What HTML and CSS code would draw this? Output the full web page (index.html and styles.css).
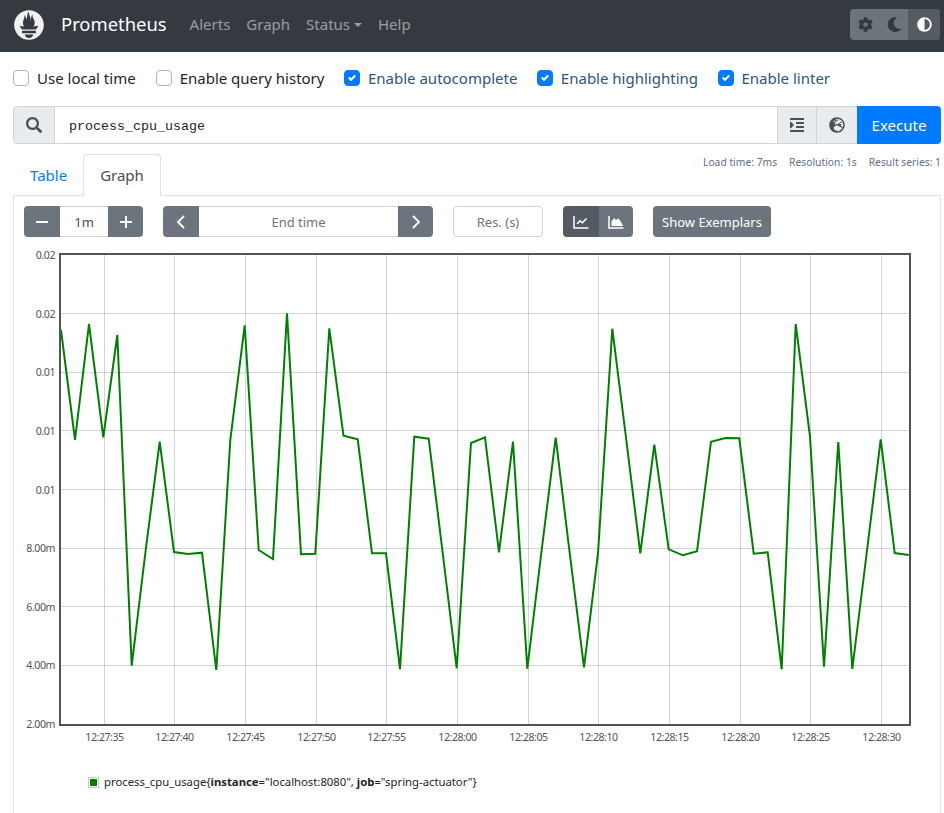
FILE: index.html
```html
<!DOCTYPE html>
<html lang="en">
<head>
<meta charset="utf-8">
<title>Prometheus Time Series Collection and Processing Server</title>
<link rel="stylesheet" href="styles.css">
</head>
<body>
<svg class="defs" width="0" height="0" aria-hidden="true">
  <symbol id="check" viewBox="0 0 8 8"><path d="M6.564.75l-3.59 3.612-1.538-1.55L0 4.26l2.974 2.99L8 2.193z"/></symbol>
</svg>
<nav class="navbar">
  <svg class="logo" viewBox="0 0 113.333 114.667"><path fill="#f2f2f2" d="M56.667.667C25.372.667 0 26.036 0 57.332c0 31.295 25.372 56.666 56.667 56.666s56.666-25.371 56.666-56.666C113.333 26.036 87.961.667 56.667.667zm0 106.055c-8.904 0-16.123-5.948-16.123-13.283H72.79c0 7.335-7.219 13.283-16.123 13.283zM83.297 89H30.034v-9.658h53.264V89zm-.191-14.629H30.186c-.176-.203-.356-.403-.526-.609-5.452-6.62-6.736-10.076-7.983-13.598-.021-.116 6.611 1.355 11.314 2.413 0 0 2.42.56 5.958 1.205-3.397-3.982-5.414-9.044-5.414-14.218 0-11.359 8.712-21.285 5.569-29.308 3.059.249 6.331 6.456 6.552 16.161 3.252-4.494 4.613-12.701 4.613-17.733 0-5.21 3.433-11.262 6.867-11.469-3.061 5.045.793 9.37 4.219 20.099 1.285 4.03 1.121 10.812 2.113 15.113.329-8.933 1.865-21.967 7.532-26.467-2.5 5.667.37 12.758 2.333 16.167 3.167 5.5 5.087 9.667 5.087 17.548 0 5.284-1.951 10.259-5.242 14.148 3.742-.702 6.326-1.335 6.326-1.335l12.152-2.371c.001-.001-1.765 7.261-8.55 14.254z"/></svg>
  <a class="brand">Prometheus</a>
  <ul class="nav">
    <li>Alerts</li>
    <li>Graph</li>
    <li>Status<span class="caret"></span></li>
    <li>Help</li>
  </ul>
  <div class="theme">
    <span class="theme-btn gear"><svg viewBox="0 0 512 512"><path d="M487.4 315.7l-42.6-24.6c4.3-23.2 4.3-47 0-70.2l42.6-24.6c4.9-2.8 7.1-8.6 5.5-14-11.1-35.6-30-67.8-54.7-94.6-3.8-4.1-10-5.1-14.8-2.3L380.8 110c-17.9-15.4-38.5-27.3-60.8-35.1V25.8c0-5.6-3.9-10.5-9.4-11.7-36.7-8.2-74.3-7.8-109.2 0-5.5 1.2-9.4 6.1-9.4 11.7V75c-22.2 7.9-42.8 19.8-60.8 35.1L88.7 85.5c-4.9-2.8-11-1.9-14.8 2.3-24.7 26.7-43.6 58.9-54.7 94.6-1.7 5.4.6 11.2 5.5 14L67.3 221c-4.3 23.2-4.3 47 0 70.2l-42.6 24.6c-4.9 2.8-7.1 8.6-5.5 14 11.1 35.6 30 67.8 54.7 94.6 3.8 4.1 10 5.1 14.8 2.3l42.6-24.6c17.9 15.4 38.5 27.3 60.8 35.1v49.2c0 5.6 3.9 10.5 9.4 11.7 36.7 8.2 74.3 7.8 109.2 0 5.5-1.2 9.4-6.1 9.4-11.7v-49.2c22.2-7.9 42.8-19.8 60.8-35.1l42.6 24.6c4.9 2.8 11 1.9 14.8-2.3 24.7-26.7 43.6-58.9 54.7-94.6 1.5-5.5-.7-11.3-5.6-14.1zM256 336c-44.1 0-80-35.9-80-80s35.9-80 80-80 80 35.9 80 80-35.9 80-80 80z"/></svg></span>
    <span class="theme-btn moon"><svg viewBox="0 0 512 512"><path d="M283.211 512c78.962 0 151.079-35.925 198.857-94.792 7.068-8.708-.639-21.43-11.562-19.35-124.203 23.654-238.262-71.576-238.262-196.954 0-72.222 38.662-138.635 101.498-174.394 9.686-5.512 7.25-20.197-3.756-22.23A258.156 258.156 0 0 0 283.211 0c-141.309 0-256 114.511-256 256 0 141.309 114.511 256 256 256z"/></svg></span>
    <span class="theme-btn adjust"><svg viewBox="0 0 512 512"><path d="M8 256c0 136.966 111.033 248 248 248s248-111.034 248-248S392.966 8 256 8 8 119.033 8 256zm248 184V72c101.705 0 184 82.311 184 184 0 101.705-82.311 184-184 184z"/></svg></span>
  </div>
</nav>
<main class="page">
  <div class="options">
    <label class="opt"><span class="box"></span>Use local time</label>
    <label class="opt"><span class="box"></span>Enable query history</label>
    <label class="opt on"><span class="box"><svg><use href="#check"/></svg></span>Enable autocomplete</label>
    <label class="opt on"><span class="box"><svg><use href="#check"/></svg></span>Enable highlighting</label>
    <label class="opt on"><span class="box"><svg><use href="#check"/></svg></span>Enable linter</label>
  </div>
  <div class="query">
    <span class="addon search"><svg viewBox="0 0 512 512"><path d="M505 442.7L405.3 343c-4.5-4.5-10.6-7-17-7H372c27.6-35.3 44-79.7 44-128C416 93.1 322.9 0 208 0S0 93.1 0 208s93.1 208 208 208c48.3 0 92.7-16.4 128-44v16.3c0 6.4 2.5 12.5 7 17l99.7 99.7c9.4 9.4 24.6 9.4 33.9 0l28.3-28.3c9.4-9.4 9.4-24.6.1-34zM208 344c-75 0-136-61-136-136 0-75 61-136 136-136 75 0 136 61 136 136 0 75-61 136-136 136z"/></svg></span>
    <div class="expr">process_cpu_usage</div>
    <span class="addon indent"><svg viewBox="0 0 448 512"><path d="M27.31 363.3l96-96a16 16 0 0 0 0-22.62l-96-96C17.27 138.66 0 145.78 0 160v192c0 14.31 17.33 21.3 27.31 11.3zM432 416H16a16 16 0 0 0-16 16v32a16 16 0 0 0 16 16h416a16 16 0 0 0 16-16v-32a16 16 0 0 0-16-16zm3.17-128H204.83A12.82 12.82 0 0 0 192 300.83v38.34A12.82 12.82 0 0 0 204.83 352h230.34A12.82 12.82 0 0 0 448 339.17v-38.34A12.82 12.82 0 0 0 435.17 288zm0-128H204.83A12.82 12.82 0 0 0 192 172.83v38.34A12.82 12.82 0 0 0 204.83 224h230.34A12.82 12.82 0 0 0 448 211.17v-38.34A12.82 12.82 0 0 0 435.17 160zM432 32H16A16 16 0 0 0 0 48v32a16 16 0 0 0 16 16h416a16 16 0 0 0 16-16V48a16 16 0 0 0-16-16z"/></svg></span>
    <span class="addon globe"><svg viewBox="0 0 496 512"><path d="M248 8C111 8 0 119 0 256s111 248 248 248 248-111 248-248S385 8 248 8zm200 248c0 22.5-3.9 44.2-10.8 64.4h-20.3c-4.3 0-8.4-1.7-11.4-4.8l-32-32.6c-4.5-4.6-4.5-12.1.1-16.7l12.5-12.5v-8.7c0-3-1.2-5.9-3.3-8l-9.4-9.4c-2.1-2.1-5-3.3-8-3.3h-16c-6.2 0-11.3-5.1-11.3-11.3 0-3 1.2-5.9 3.3-8l9.4-9.4c2.1-2.1 5-3.3 8-3.3h32c6.2 0 11.3-5.1 11.3-11.3v-9.4c0-6.2-5.1-11.3-11.3-11.3h-36.7c-8.8 0-16 7.2-16 16v4.5c0 6.9-4.4 13-10.9 15.2l-31.6 10.5c-3.3 1.1-5.5 4.1-5.5 7.6v2.2c0 4.4-3.6 8-8 8h-16c-4.4 0-8-3.6-8-8s-3.6-8-8-8H247c-3 0-5.8 1.7-7.2 4.4l-9.4 18.7c-2.7 5.4-8.2 8.8-14.3 8.8H194c-8.8 0-16-7.2-16-16V199c0-4.2 1.7-8.3 4.7-11.3l20.1-20.1c4.6-4.6 7.2-10.9 7.2-17.5 0-3.4 2.2-6.5 5.5-7.6l40-13.3c1.7-.6 3.2-1.5 4.4-2.7l26.8-26.8c2.1-2.1 3.3-5 3.3-8 0-6.2-5.1-11.3-11.3-11.3H258l-16 16v8c0 4.4-3.6 8-8 8h-16c-4.4 0-8-3.6-8-8v-20c0-2.5 1.2-4.9 3.2-6.4l28.9-21.7c1.9-.1 3.8-.3 5.7-.3C358.3 56 448 145.7 448 256zM130.1 149.1c0-3 1.2-5.9 3.3-8l25.4-25.4c2.1-2.1 5-3.3 8-3.3 6.2 0 11.3 5.1 11.3 11.3v16c0 3-1.2 5.9-3.3 8l-9.4 9.4c-2.1 2.1-5 3.3-8 3.3h-16c-6.2 0-11.3-5.1-11.3-11.3zm128 306.4v-7.1c0-8.8-7.2-16-16-16h-20.2c-10.8 0-26.7-5.3-35.4-11.8l-22.2-16.7c-11.5-8.6-18.2-22.1-18.2-36.4v-23.9c0-16 8.4-30.8 22.1-39l42.9-25.7c7.1-4.2 15.2-6.5 23.4-6.5h31.2c10.9 0 21.4 3.9 29.6 10.9l43.2 37.1h18.3c8.5 0 16.6 3.4 22.6 9.4l17.3 17.3c3.4 3.4 8.1 5.3 12.9 5.3H423c-32.4 58.9-93.8 99.5-164.9 103.1z"/></svg></span>
    <button class="execute">Execute</button>
  </div>
  <div class="tabbar">
    <ul class="tabs">
      <li class="tab">Table</li>
      <li class="tab active">Graph</li>
    </ul>
    <div class="stats">
      <span>Load time: 7ms</span>
      <span>Resolution: 1s</span>
      <span>Result series: 1</span>
    </div>
  </div>
  <section class="panel">
    <div class="controls">
      <div class="group range">
        <span class="btn"><svg class="line-icon" viewBox="0 0 14 14"><path d="M1 7H13"/></svg></span>
        <span class="field mid">1m</span>
        <span class="btn plus"><svg class="line-icon" viewBox="0 0 14 14"><path d="M1 7H13M7 1V13"/></svg></span>
      </div>
      <div class="group end">
        <span class="btn"><svg class="line-icon" viewBox="0 0 14 14"><path d="M10 1L4 7L10 13"/></svg></span>
        <span class="field mid grow placeholder">End time</span>
        <span class="btn plus"><svg class="line-icon" viewBox="0 0 14 14"><path d="M4 1L10 7L4 13"/></svg></span>
      </div>
      <span class="field res placeholder">Res. (s)</span>
      <div class="group kind">
        <span class="btn pressed"><svg class="line-icon chart-icon" viewBox="0 0 16 14"><path d="M1 1V13H15.5M4 9L7 5.8L9.5 7.8L13.5 3.5"/></svg></span>
        <span class="btn"><svg class="line-icon chart-icon" viewBox="0 0 16 14"><path d="M1 1V13H15.5"/><path class="hill" d="M3.5 11V6.5L6.3 3L8 5L10.5 3.5L13.5 7.5L15 11Z"/></svg></span>
      </div>
      <button class="exemplars">Show Exemplars</button>
    </div>
    <svg class="chart" width="926" height="515" viewBox="14 245 926 515">
      <g class="grid">
        <path d="M60 313.5H910M60 372.5H910M60 430.5H910M60 489.5H910M60 548.5H910M60 606.5H910M60 665.5H910"/>
        <path d="M104.5 254V725M174.5 254V725M245.5 254V725M316.5 254V725M386.5 254V725M457.5 254V725M528.5 254V725M598.5 254V725M669.5 254V725M740.5 254V725M810.5 254V725M881.5 254V725"/>
      </g>
      <polyline class="series" points="61,330 75,440 89,324 103.3,437.3 117.3,335 131.7,665.7 145.7,550 159.7,441.7 174,552 188,554 202,552.7 216.3,670 230.3,440 244.7,325.3 258.7,550 273,559 287,313.3 301,554.3 315.3,553.7 329.3,328.3 343.5,435.7 357.7,439.3 372,553.3 386,553.3 400,669.3 414.3,436.7 428.7,438.7 442.7,553 456.7,668.3 471,443 485,437.3 499,552.3 513,441.7 527.3,668.7 541.3,553 555.7,437.7 569.7,553 584,667.3 598,553.3 612.3,328.7 626.3,440 640.3,553.3 654.3,444.7 668.7,549.3 683,555.3 697,551.3 711,441.7 725.3,438 739.3,438.3 753.7,553.7 767.7,552.3 781.7,669.3 795.7,324 810,436.7 824,666.7 838.3,442 852.3,669 866.7,553 880.7,439.3 894.7,553 908.7,555"/>
      <rect class="frame" x="60" y="254" width="850" height="471"/>
      <g class="ylabels">
        <text x="55" y="259">0.02</text>
        <text x="55" y="318">0.02</text>
        <text x="55" y="376">0.01</text>
        <text x="55" y="435">0.01</text>
        <text x="55" y="494">0.01</text>
        <text x="55" y="552">8.00m</text>
        <text x="55" y="611">6.00m</text>
        <text x="55" y="669">4.00m</text>
        <text x="55" y="728">2.00m</text>
      </g>
      <g class="xlabels">
        <text x="104.5" y="741">12:27:35</text>
        <text x="174.5" y="741">12:27:40</text>
        <text x="245.5" y="741">12:27:45</text>
        <text x="316.5" y="741">12:27:50</text>
        <text x="386.5" y="741">12:27:55</text>
        <text x="457.5" y="741">12:28:00</text>
        <text x="528.5" y="741">12:28:05</text>
        <text x="598.5" y="741">12:28:10</text>
        <text x="669.5" y="741">12:28:15</text>
        <text x="740.5" y="741">12:28:20</text>
        <text x="810.5" y="741">12:28:25</text>
        <text x="881.5" y="741">12:28:30</text>
      </g>
    </svg>
    <div class="legend">
      <span class="swatch"><span></span></span>
      <span class="legend-text">process_cpu_usage{<b>instance</b>="localhost:8080", <b>job</b>="spring-actuator"}</span>
    </div>
  </section>
</main>
</body>
</html>
```

FILE: styles.css
```css
* { box-sizing: border-box; }
html, body { margin: 0; height: 100%; }
body {
  display: flex;
  flex-direction: column;
  height: 100vh;
  overflow: hidden;
  background: #fff;
  color: #212529;
  font-family: "Noto Sans", "Open Sans", sans-serif;
  font-size: 15px;
  line-height: 24px;
}
.defs { position: absolute; }
svg { display: block; fill: currentColor; }
ul { list-style: none; margin: 0; padding: 0; }

.navbar {
  display: flex;
  align-items: center;
  flex: none;
  height: 52px;
  padding: 0 4px 3px 14px;
  background: #343a40;
}
.logo { width: 30px; height: 30px; }
.brand { margin-left: 17px; margin-bottom: 1px; color: #fff; font-size: 18.4px; }
.nav { display: flex; gap: 16px; margin-left: 23px; margin-bottom: 1px; color: rgba(255, 255, 255, .5); }
.caret {
  display: inline-block;
  margin-left: 4px;
  vertical-align: 3px;
  border-top: 4.8px solid;
  border-left: 4.8px solid transparent;
  border-right: 4.8px solid transparent;
}
.theme {
  display: flex;
  margin-left: auto;
  height: 31px;
  border-radius: 4px;
  overflow: hidden;
  background: #6c757d;
  color: #343a40;
}
.theme-btn { display: flex; align-items: center; justify-content: center; }
.theme-btn svg { width: 15px; height: 15px; }
.gear { width: 31px; }
.moon { width: 27px; }
.adjust { width: 32px; background: #545b62; color: #fff; }

.page {
  display: flex;
  flex-direction: column;
  flex: 1;
  min-height: 0;
  padding: 0 3px 0 13px;
}
.options { display: flex; gap: 20px; height: 54px; padding-bottom: 2px; align-items: center; }
.opt { display: flex; align-items: center; gap: 8px; }
.opt.on { color: #2f5480; gap: 7.5px; }
.box {
  display: flex;
  align-items: center;
  justify-content: center;
  width: 16px;
  height: 16px;
  border: 1px solid #adb5bd;
  border-radius: 4px;
  background: #fff;
}
.on .box { border-color: #007bff; background: #007bff; color: #fff; }
.box svg { width: 8px; height: 8px; }

.query { display: flex; height: 38px; }
.addon {
  display: flex;
  align-items: center;
  justify-content: center;
  background: #e9ecef;
  border: 1px solid #ced4da;
  color: #495057;
}
.addon svg { width: 16px; height: 16px; }
.search { width: 42px; border-radius: 4px 0 0 4px; }
.expr {
  flex: 1;
  padding: 8px 0 0 14px;
  border: solid #ced4da;
  border-width: 1px 0;
  color: #212529;
  font-family: "Liberation Mono", monospace;
  font-size: 13.33px;
}
.indent { width: 40px; }
.globe { width: 40px; border-left: 0; border-right: 0; }
.execute {
  width: 84px;
  border: 0;
  border-radius: 0 4px 4px 0;
  background: #007bff;
  color: #fff;
  font: inherit;
}

.tabbar { display: flex; justify-content: space-between; height: 41px; margin-top: 10px; flex: none; }
.tabs { display: flex; position: relative; height: 42px; }
.tab {
  padding: 8px 16px;
  margin-right: -1px;
  border: 1px solid transparent;
  border-radius: 4px 4px 0 0;
  color: #007bff;
}
.tab.active { color: #495057; background: #fff; border-color: #dee2e6 #dee2e6 #fff; }
.stats { display: flex; gap: 12px; font-size: 10.3px; line-height: 16px; color: #5f6f85; }

.panel {
  display: flex;
  flex-direction: column;
  flex: 1;
  min-height: 0;
  border: 1px solid #dee2e6;
  border-bottom: 0;
  padding-top: 10px;
}
.controls { display: flex; align-items: stretch; height: 31px; margin-left: 10px; font-size: 13px; line-height: 21px; }
.group { display: flex; border-radius: 4px; overflow: hidden; }
.btn {
  display: flex;
  align-items: center;
  justify-content: center;
  width: 36px;
  background: #6c757d;
  color: #fff;
}
.btn svg { width: 14px; height: 14px; }
.line-icon path { fill: none; stroke: currentColor; stroke-width: 1.9; }
.field {
  display: flex;
  align-items: center;
  justify-content: center;
  padding-top: 1px;
  border: 1px solid #ced4da;
  background: #fff;
  color: #495057;
}
.mid { border-width: 1px 0; width: 48px; }
.plus { width: 35px; }
.grow { width: 199px; }
.placeholder { color: #6c757d; }
.end { margin-left: 20px; }
.res { width: 90px; margin-left: 20px; border-radius: 4px; }
.kind { margin-left: 20px; }
.kind .btn { width: 34px; }
.kind .pressed { width: 36px; background: #545b62; }
.kind .btn .chart-icon { width: 16px; height: 14px; }
.chart-icon path { stroke-width: 1.5; }
.chart-icon .hill { fill: currentColor; stroke: none; }
.exemplars {
  width: 118px;
  margin-left: 20px;
  padding: 1px 0 0;
  border: 0;
  border-radius: 4px;
  background: #6c757d;
  color: #fff;
  font: inherit;
}
.chart { flex: none; margin-top: 8px; }
.grid path { fill: none; stroke: rgba(84, 84, 84, .25); stroke-width: 1; }
.series { fill: none; stroke: #008000; stroke-width: 2; stroke-linejoin: miter; }
.frame { fill: none; stroke: #545454; stroke-width: 2; }
.ylabels, .xlabels { fill: #545454; font-size: 10.6px; letter-spacing: -.45px; }
.ylabels { text-anchor: end; }
.xlabels { text-anchor: middle; }

.legend { display: flex; align-items: center; margin: 10px 0 0 74px; height: 24px; font-size: 11.3px; }
.swatch { display: block; width: 11px; height: 11px; padding: 1px; border: 1px solid #ccc; margin-right: 5px; }
.swatch span { display: block; width: 100%; height: 100%; background: #008000; }
```
